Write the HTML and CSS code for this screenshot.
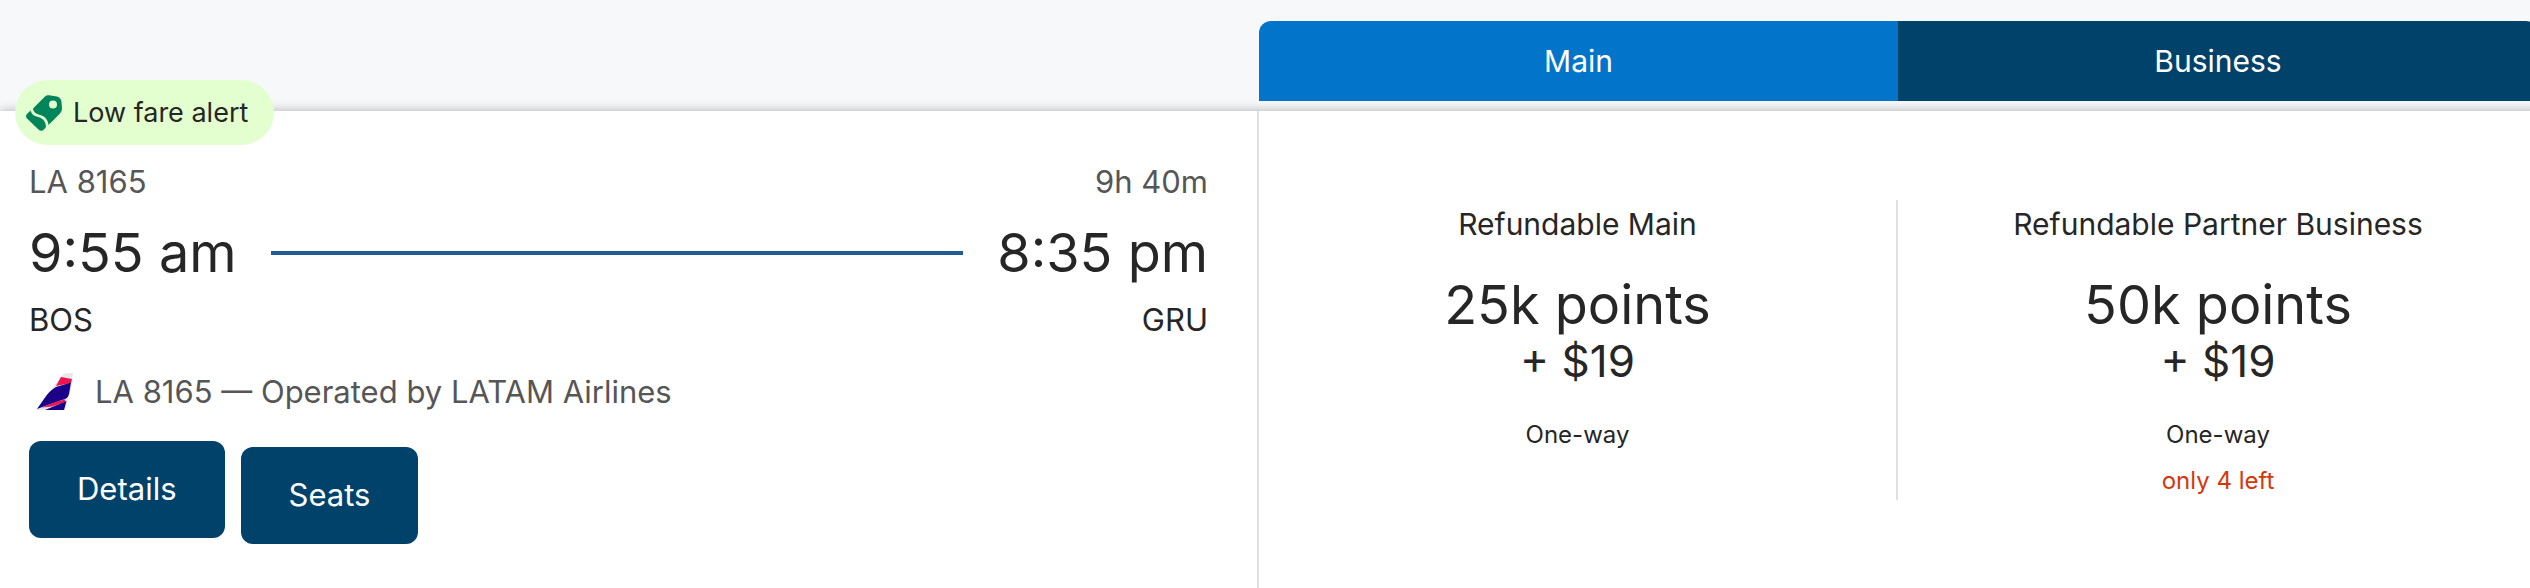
FILE: index.html
```html
<!DOCTYPE html>
<html lang="en">
<head>
<meta charset="utf-8">
<meta name="viewport" content="width=device-width, initial-scale=1">
<title>Flight results</title>
<link rel="stylesheet" href="styles.css">
</head>
<body>
<main class="results">
  <header class="cabins">
    <h2 class="cabin cabin-main">Main</h2>
    <h2 class="cabin cabin-business">Business</h2>
  </header>
  <article class="flight">
    <p class="badge">
      <svg class="badge-icon" viewBox="0 0 36 36" aria-hidden="true">
        <path fill="#00855b" d="M19 1.500Q20.500 0 23 .3L31 1.500Q35 2.500 35.500 7L36 13.500Q36 16.500 34 18.500L22.500 30Q22 25 18.500 22 16 20 12.500 19.500 8.500 18.500 7 14.500Q7 13.500 8 12.500Z"/>
        <path fill="#00855b" d="M4.500 15.500Q6 20.500 10.500 21.500 15 22 17.500 25 20 27.500 20 32L18 34.500Q15 37 12.500 34.500L1 23.500Q-1 21 1 19Z"/>
        <circle cx="27" cy="9.500" r="4" fill="#e3ffcf"/>
      </svg>
      Low fare alert
    </p>
    <section class="trip">
      <div class="row muted"><span>LA 8165</span><span>9h 40m</span></div>
      <div class="row times"><time datetime="09:55">9:55 am</time><span class="line"></span><time datetime="20:35">8:35 pm</time></div>
      <div class="row"><span>BOS</span><span>GRU</span></div>
      <div class="operator muted">
        <svg class="tail" viewBox="0 0 37 38" aria-hidden="true">
          <path fill="#e6e7ea" d="M0 37 14 18 24 5Q27 1 30 0H37L35 16 29 37Z"/>
          <path fill="#f0134f" d="M25 4 36 6 35 10 20 13Z"/>
          <path fill="#1b0088" d="M35 9.500 33 21Q32 25 29 26L9 33 1 36 8 26Q13 18 20 14Z"/>
          <path fill="#f0134f" d="M12 32Q21 28 29 26.500L29 29 16 33.500 6 34.500Z"/>
          <path fill="#1b0088" d="M9 37 27 29.500 30.500 28 28 37Z"/>
        </svg>
        <span>LA 8165 — Operated by LATAM Airlines</span>
      </div>
      <div class="actions">
        <button class="btn" type="button">Details</button>
        <button class="btn btn-seats" type="button">Seats</button>
      </div>
    </section>
    <section class="fares">
      <div class="fare">
        <h3 class="fare-name">Refundable Main</h3>
        <p class="points">25k points</p>
        <p class="tax">+ $19</p>
        <p class="note">One-way</p>
      </div>
      <div class="fare">
        <h3 class="fare-name">Refundable Partner Business</h3>
        <p class="points">50k points</p>
        <p class="tax">+ $19</p>
        <p class="note">One-way</p>
        <p class="note low">only 4 left</p>
      </div>
    </section>
  </article>
</main>
</body>
</html>
```
FILE: styles.css
```css
* { box-sizing: border-box; }
body {
  margin: 0;
  background: #f7f8fa;
  color: #262626;
  font: 400 31px/40px Inter, "Liberation Sans", sans-serif;
}
h2, h3, p { margin: 0; font-weight: 400; font-size: inherit; }
.results {
  min-height: 100vh;
  display: flex;
  flex-direction: column;
  overflow: hidden;
}
.cabins, .flight {
  display: grid;
  grid-template-columns: 1259fr 639fr 640fr;
  margin-right: -8px;
}
.cabins { padding: 21px 0 10px; }
.cabin {
  display: flex;
  align-items: center;
  justify-content: center;
  height: 80px;
  color: #fff;
  font-size: 30px;
}
.cabin-main { grid-column: 2; background: #0274ca; border-top-left-radius: 12px; }
.cabin-business { background: #01426a; border-top-right-radius: 12px; }
.flight {
  flex: 1;
  position: relative;
  background: #fff;
  box-shadow: 0 0 10px rgba(0, 0, 0, .3);
}
.badge {
  position: absolute;
  top: -31px;
  left: 15px;
  display: flex;
  align-items: center;
  gap: 11px;
  height: 65px;
  padding: 0 26px 0 11px;
  border-radius: 33px;
  background: #e3ffcf;
  font-size: 27px;
}
.badge-icon { width: 36px; height: 36px; }
.trip { padding: 51px 49px 32px 29px; border-right: 2px solid #e0e0e0; }
.muted { color: #565656; }
.row { display: flex; justify-content: space-between; align-items: center; }
.times { gap: 34px; font-size: 54px; line-height: 60px; margin: 21px 0 17px; }
.line { flex: 1; height: 4px; background: #225c97; }
.operator { display: flex; align-items: center; gap: 22px; margin: 32px 0 29px; padding-left: 7px; }
.tail { width: 37px; height: 38px; }
.actions { display: flex; align-items: flex-start; gap: 16px; }
.btn {
  height: 97px;
  padding: 0 48px 2px;
  border: 0;
  border-radius: 12px;
  background: #01426a;
  color: #fff;
  font: inherit;
}
.btn-seats { margin-top: 6px; }
.fares {
  grid-column: 2 / 4;
  display: grid;
  grid-template-columns: 639fr 640fr;
  align-items: start;
  padding: 89px 0 78px;
}
.fare { min-height: 300px; padding-top: 4px; text-align: center; }
.fare:first-child { border-right: 2px solid #e0e0e0; }
.fare-name { font-size: 30px; }
.points { margin-top: 33px; font-size: 54px; line-height: 56px; }
.tax { font-size: 44px; line-height: 56px; }
.note { margin-top: 30px; font-size: 24px; line-height: 32px; }
.note + .note { margin-top: 14px; }
.low { color: #d5370c; }
```
